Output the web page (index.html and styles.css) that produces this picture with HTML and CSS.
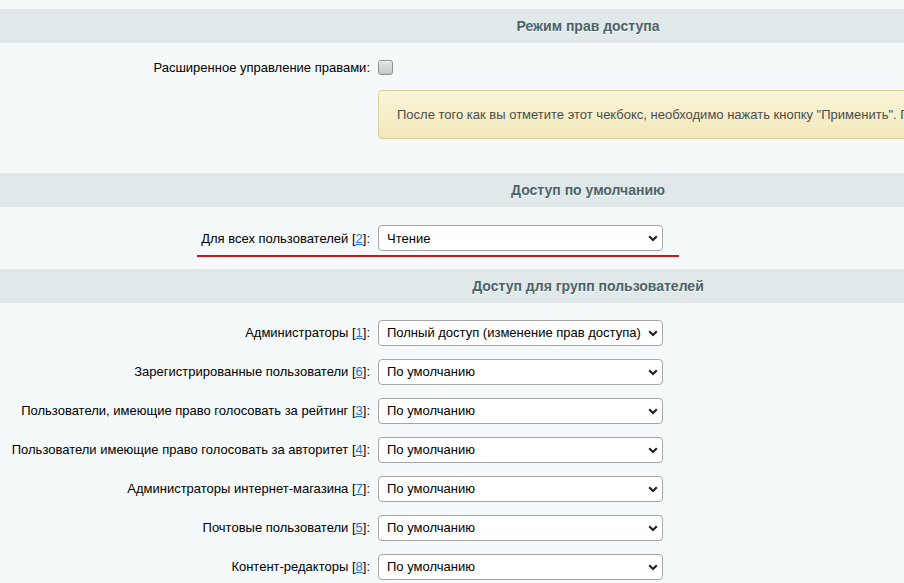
FILE: index.html
```html
<!DOCTYPE html>
<html lang="ru">
<head>
<meta charset="utf-8">
<link rel="stylesheet" href="styles.css">
</head>
<body>
<div class="page">
  <div class="section">
    <div class="head">Режим прав доступа</div>
    <div class="body body-first">
      <div class="row row-check">
        <div class="label">Расширенное управление правами:</div>
        <div class="field"><span class="checkbox"></span></div>
      </div>
      <div class="row">
        <div class="label"></div>
        <div class="field field-wide"><div class="note">После того как вы отметите этот чекбокс, необходимо нажать кнопку "Применить". После этого вы сможете настроить расширенные права доступа.</div></div>
      </div>
    </div>
  </div>

  <div class="section">
    <div class="head">Доступ по умолчанию</div>
    <div class="body body-second">
      <div class="row row-sel marked">
        <div class="label">Для всех пользователей [<a href="#">2</a>]:</div>
        <div class="field"><div class="select"><span>Чтение</span><svg class="chev" width="10" height="7" viewBox="0 0 10 7"><path d="M1.2 1.3 L5 5 L8.8 1.3" fill="none" stroke="#222" stroke-width="2.2"/></svg></div></div>
      </div>
    </div>
  </div>

  <div class="section">
    <div class="head">Доступ для групп пользователей</div>
    <div class="body body-groups">
      <div class="row row-sel">
        <div class="label">Администраторы [<a href="#">1</a>]:</div>
        <div class="field"><div class="select"><span>Полный доступ (изменение прав доступа)</span><svg class="chev" width="10" height="7" viewBox="0 0 10 7"><path d="M1.2 1.3 L5 5 L8.8 1.3" fill="none" stroke="#222" stroke-width="2.2"/></svg></div></div>
      </div>
      <div class="row row-sel">
        <div class="label">Зарегистрированные пользователи [<a href="#">6</a>]:</div>
        <div class="field"><div class="select"><span>По умолчанию</span><svg class="chev" width="10" height="7" viewBox="0 0 10 7"><path d="M1.2 1.3 L5 5 L8.8 1.3" fill="none" stroke="#222" stroke-width="2.2"/></svg></div></div>
      </div>
      <div class="row row-sel">
        <div class="label">Пользователи, имеющие право голосовать за рейтинг [<a href="#">3</a>]:</div>
        <div class="field"><div class="select"><span>По умолчанию</span><svg class="chev" width="10" height="7" viewBox="0 0 10 7"><path d="M1.2 1.3 L5 5 L8.8 1.3" fill="none" stroke="#222" stroke-width="2.2"/></svg></div></div>
      </div>
      <div class="row row-sel">
        <div class="label">Пользователи имеющие право голосовать за авторитет [<a href="#">4</a>]:</div>
        <div class="field"><div class="select"><span>По умолчанию</span><svg class="chev" width="10" height="7" viewBox="0 0 10 7"><path d="M1.2 1.3 L5 5 L8.8 1.3" fill="none" stroke="#222" stroke-width="2.2"/></svg></div></div>
      </div>
      <div class="row row-sel">
        <div class="label">Администраторы интернет-магазина [<a href="#">7</a>]:</div>
        <div class="field"><div class="select"><span>По умолчанию</span><svg class="chev" width="10" height="7" viewBox="0 0 10 7"><path d="M1.2 1.3 L5 5 L8.8 1.3" fill="none" stroke="#222" stroke-width="2.2"/></svg></div></div>
      </div>
      <div class="row row-sel">
        <div class="label">Почтовые пользователи [<a href="#">5</a>]:</div>
        <div class="field"><div class="select"><span>По умолчанию</span><svg class="chev" width="10" height="7" viewBox="0 0 10 7"><path d="M1.2 1.3 L5 5 L8.8 1.3" fill="none" stroke="#222" stroke-width="2.2"/></svg></div></div>
      </div>
      <div class="row row-sel">
        <div class="label">Контент-редакторы [<a href="#">8</a>]:</div>
        <div class="field"><div class="select"><span>По умолчанию</span><svg class="chev" width="10" height="7" viewBox="0 0 10 7"><path d="M1.2 1.3 L5 5 L8.8 1.3" fill="none" stroke="#222" stroke-width="2.2"/></svg></div></div>
      </div>
    </div>
  </div>
</div>
</body>
</html>
```
FILE: styles.css
```css
html, body {
  margin: 0;
  padding: 0;
  background: #f5f9f9;
  overflow: hidden;
}
body {
  font-family: "Liberation Sans", Arial, sans-serif;
  font-size: 13px;
  color: #000;
}
.page {
  width: 1176px;
  padding-top: 9px;
}
.head {
  height: 34px;
  line-height: 34px;
  background: #e0e8ea;
  text-align: center;
  font-size: 14px;
  font-weight: bold;
  color: #4b6267;
  text-shadow: 0 1px #fff;
}
.body-first {
  padding: 12px 0 34px;
}
.body-second {
  padding: 12px 0 12px;
}
.body-groups {
  padding: 10px 0 0;
}
.row {
  display: flex;
  align-items: center;
}
.row-check {
  height: 24px;
  margin-bottom: 11px;
}
.row-sel {
  height: 39px;
}
.body-second .row-sel {
  height: 38px;
}
.label {
  width: 370px;
  flex: none;
  text-align: right;
  white-space: nowrap;
}
.label a {
  color: #2675d7;
  text-decoration: underline;
}
.field {
  padding-left: 8px;
  display: flex;
  align-items: center;
}
.field-wide {
  flex: 1;
}
.checkbox {
  display: block;
  width: 13px;
  height: 13px;
  border: 1px solid #8a9194;
  border-radius: 3px;
  background: linear-gradient(#e2e5e6, #c3c8ca);
  box-shadow: inset 0 1px 0 #f4f5f6;
}
.note {
  flex: 1;
  height: 47px;
  line-height: 47px;
  padding-left: 18px;
  border: 1px solid #d8cfa0;
  border-radius: 4px;
  background: linear-gradient(#fbf6da, #f1e8b9);
  color: #4c4c4c;
  white-space: nowrap;
  overflow: hidden;
}
.select {
  position: relative;
  box-sizing: border-box;
  width: 285px;
  height: 26px;
  border: 1px solid #a6a6a6;
  border-radius: 4px;
  background: #fff;
  display: flex;
  align-items: center;
  padding-left: 8px;
  white-space: nowrap;
}
.chev {
  position: absolute;
  right: 4px;
  top: 9px;
}
.marked {
  position: relative;
}
.marked::after {
  content: "";
  position: absolute;
  left: 197px;
  width: 482px;
  bottom: 0;
  height: 2px;
  background: #cc1518;
}
```
